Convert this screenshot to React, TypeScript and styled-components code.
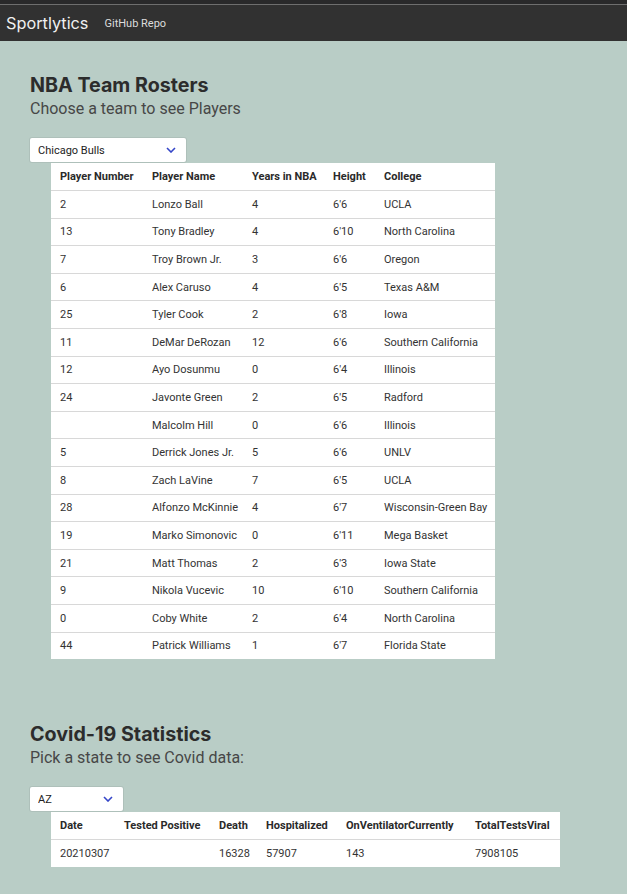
import React, { useState } from "react";
import styled, { createGlobalStyle } from "styled-components";

const GlobalStyle = createGlobalStyle`
  html, body {
    margin: 0;
    padding: 0;
    background: #b9cdc6;
    font-family: Inter, "Noto Sans", "Liberation Sans", sans-serif;
    color: #2f2f2f;
  }
`;

interface Player {
  num: string;
  name: string;
  years: string;
  height: string;
  college: string;
}

const players: Player[] = [
  { num: "2", name: "Lonzo Ball", years: "4", height: "6'6", college: "UCLA" },
  { num: "13", name: "Tony Bradley", years: "4", height: "6'10", college: "North Carolina" },
  { num: "7", name: "Troy Brown Jr.", years: "3", height: "6'6", college: "Oregon" },
  { num: "6", name: "Alex Caruso", years: "4", height: "6'5", college: "Texas A&M" },
  { num: "25", name: "Tyler Cook", years: "2", height: "6'8", college: "Iowa" },
  { num: "11", name: "DeMar DeRozan", years: "12", height: "6'6", college: "Southern California" },
  { num: "12", name: "Ayo Dosunmu", years: "0", height: "6'4", college: "Illinois" },
  { num: "24", name: "Javonte Green", years: "2", height: "6'5", college: "Radford" },
  { num: "", name: "Malcolm Hill", years: "0", height: "6'6", college: "Illinois" },
  { num: "5", name: "Derrick Jones Jr.", years: "5", height: "6'6", college: "UNLV" },
  { num: "8", name: "Zach LaVine", years: "7", height: "6'5", college: "UCLA" },
  { num: "28", name: "Alfonzo McKinnie", years: "4", height: "6'7", college: "Wisconsin-Green Bay" },
  { num: "19", name: "Marko Simonovic", years: "0", height: "6'11", college: "Mega Basket" },
  { num: "21", name: "Matt Thomas", years: "2", height: "6'3", college: "Iowa State" },
  { num: "9", name: "Nikola Vucevic", years: "10", height: "6'10", college: "Southern California" },
  { num: "0", name: "Coby White", years: "2", height: "6'4", college: "North Carolina" },
  { num: "44", name: "Patrick Williams", years: "1", height: "6'7", college: "Florida State" },
];

const rosterCols = [
  { label: "Player Number", width: 92 },
  { label: "Player Name", width: 100 },
  { label: "Years in NBA", width: 81 },
  { label: "Height", width: 51 },
  { label: "College", width: 120 },
];

const covidCols = [
  { label: "Date", width: 64 },
  { label: "Tested Positive", width: 95 },
  { label: "Death", width: 47 },
  { label: "Hospitalized", width: 80 },
  { label: "OnVentilatorCurrently", width: 129 },
  { label: "TotalTestsViral", width: 94 },
];

const covidRow = ["20210307", "", "16328", "57907", "143", "7908105"];

const totalWidth = (cols: { width: number }[]) => cols.reduce((s, c) => s + c.width, 0);

const Chevron = () => (
  <svg width="10" height="6" viewBox="0 0 10 6">
    <path d="M1 1 L5 5 L9 1" fill="none" stroke="#3546c8" strokeWidth="1.6" />
  </svg>
);

const Dropdown = ({ width, value, options, onChange }: {
  width: number;
  value: string;
  options: string[];
  onChange: (v: string) => void;
}) => (
  <SelectWrap $width={width}>
    <Select value={value} onChange={(e) => onChange(e.target.value)}>
      {options.map((o) => (
        <option key={o}>{o}</option>
      ))}
    </Select>
    <ChevronBox>
      <Chevron />
    </ChevronBox>
  </SelectWrap>
);

const App = () => {
  const [team, setTeam] = useState("Chicago Bulls");
  const [state, setState] = useState("AZ");

  return (
    <>
      <GlobalStyle />
      <TopStrip />
      <NavBar>
        <Brand>Sportlytics</Brand>
        <NavLink>GitHub Repo</NavLink>
      </NavBar>
      <Main>
        <Section>
          <Title>NBA Team Rosters</Title>
          <Subtitle>Choose a team to see Players</Subtitle>
          <Dropdown
            width={156}
            value={team}
            options={["Chicago Bulls", "Boston Celtics", "Los Angeles Lakers"]}
            onChange={setTeam}
          />
          <Table $width={totalWidth(rosterCols)}>
            <colgroup>
              {rosterCols.map((c) => (
                <col key={c.label} style={{ width: c.width }} />
              ))}
            </colgroup>
            <thead>
              <tr>
                {rosterCols.map((c) => (
                  <Th key={c.label}>{c.label}</Th>
                ))}
              </tr>
            </thead>
            <tbody>
              {players.map((p) => (
                <tr key={p.name}>
                  <Td>{p.num}</Td>
                  <Td>{p.name}</Td>
                  <Td>{p.years}</Td>
                  <Td>{p.height}</Td>
                  <Td>{p.college}</Td>
                </tr>
              ))}
            </tbody>
          </Table>
        </Section>
        <Section>
          <Title>Covid-19 Statistics</Title>
          <Subtitle>Pick a state to see Covid data:</Subtitle>
          <Dropdown width={93} value={state} options={["AZ", "CA", "IL", "NY"]} onChange={setState} />
          <Table $width={totalWidth(covidCols)}>
            <colgroup>
              {covidCols.map((c) => (
                <col key={c.label} style={{ width: c.width }} />
              ))}
            </colgroup>
            <thead>
              <tr>
                {covidCols.map((c) => (
                  <Th key={c.label}>{c.label}</Th>
                ))}
              </tr>
            </thead>
            <tbody>
              <tr>
                {covidRow.map((v, i) => (
                  <Td key={i}>{v}</Td>
                ))}
              </tr>
            </tbody>
          </Table>
        </Section>
      </Main>
    </>
  );
};

export default App;

const TopStrip = styled.div`
  height: 4px;
  background: #29292a;
  border-bottom: 1px solid #6e6e6e;
`;

const NavBar = styled.nav`
  height: 36px;
  background: #313131;
  display: flex;
  align-items: center;
  padding-left: 6px;
  gap: 16px;
`;

const Brand = styled.span`
  font-size: 16.3px;
  color: #f0f0f0;
`;

const NavLink = styled.a`
  font-family: Roboto, "Liberation Sans", sans-serif;
  font-size: 11px;
  color: #dcdcdc;
  cursor: pointer;
`;

const Main = styled.main`
  padding: 32px 30px 24px;
  display: flex;
  flex-direction: column;
  gap: 63px;
`;

const Section = styled.section`
  display: flex;
  flex-direction: column;
  align-items: flex-start;
`;

const Title = styled.h1`
  margin: 0;
  font-size: 19.7px;
  line-height: 24px;
  font-weight: 700;
  color: #2c2c2c;
`;

const Subtitle = styled.p`
  margin: 2px 0 19px;
  font-family: Roboto, "Liberation Sans", sans-serif;
  font-size: 16px;
  line-height: 20px;
  color: #474747;
`;

const SelectWrap = styled.div<{ $width: number }>`
  position: relative;
  width: ${({ $width }) => $width}px;
  height: 24px;
  background: #fff;
  border-radius: 2px;
  box-shadow: 0 0 0 1px rgba(0, 0, 0, 0.06);
`;

const Select = styled.select`
  appearance: none;
  width: 100%;
  height: 100%;
  border: none;
  background: transparent;
  padding: 0 0 0 8px;
  font-family: Roboto, "Liberation Sans", sans-serif;
  font-size: 11px;
  color: #222;
  outline: none;
`;

const ChevronBox = styled.span`
  position: absolute;
  right: 10px;
  top: 9px;
  display: flex;
  pointer-events: none;
`;

const Table = styled.table<{ $width: number }>`
  width: ${({ $width }) => $width}px;
  margin-left: 21px;
  margin-top: 1px;
  border-collapse: collapse;
  background: #fff;
  table-layout: fixed;
  font-family: Roboto, "Liberation Sans", sans-serif;
  font-size: 11px;
  color: #333;
`;

const Th = styled.th`
  height: 27px;
  padding: 0 9px;
  text-align: left;
  font-weight: 700;
  color: #2a2a2a;
  white-space: nowrap;
`;

const Td = styled.td`
  height: 26.6px;
  padding: 0 9px;
  border-top: 1px solid #d8d8d8;
  white-space: nowrap;
`;
